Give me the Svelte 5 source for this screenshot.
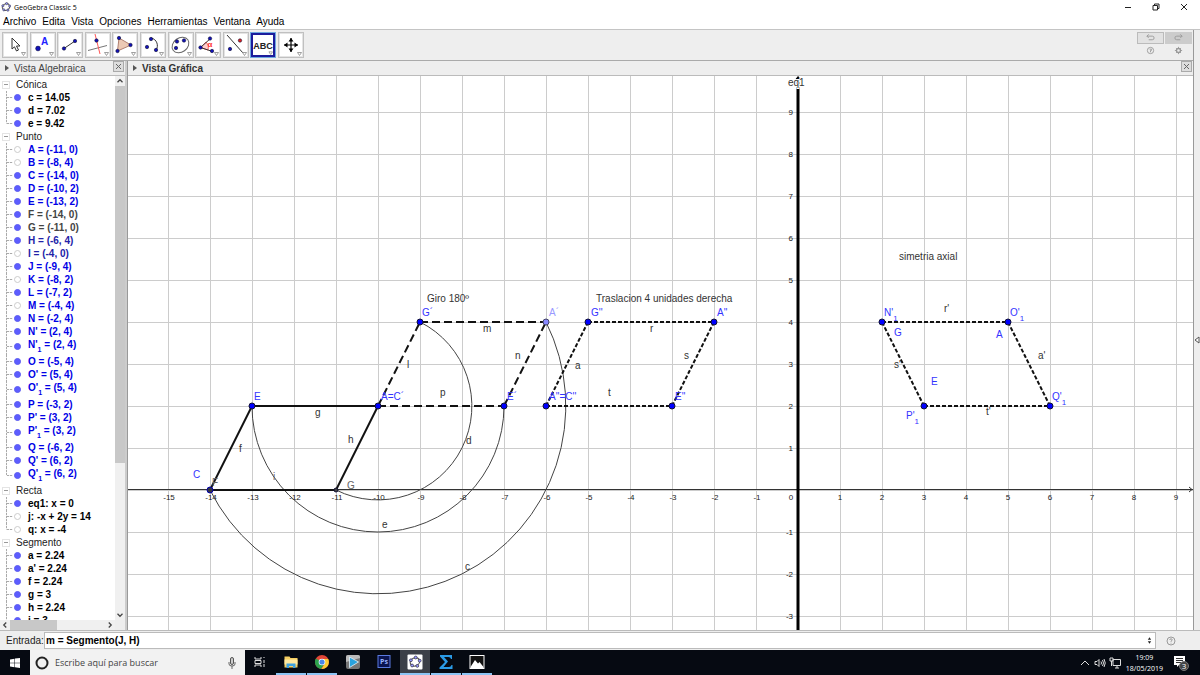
<script lang="ts">
  interface Item {
    name: string;
    sub?: string;
    value: string;
    shown: boolean;
    tone?: string;
  }

  const UNIT = 42;
  const ORIGIN_X = 670;
  const ORIGIN_Y = 414;

  let width = $state(1065);
  let height = $state(554);
  let command = $state("m = Segmento(J, H)");
  let selectedTool = $state("text");

  const menus = ["Archivo", "Edita", "Vista", "Opciones", "Herramientas", "Ventana", "Ayuda"];
  const tools = ["move", "point", "line", "perpendicular", "polygon", "arc", "ellipse", "angle", "reflect", "text", "pan"];

  const groups: { title: string; items: Item[] }[] = $state([
    {
      title: "Cónica",
      items: [
        { name: "c", value: " = 14.05", shown: true },
        { name: "d", value: " = 7.02", shown: true },
        { name: "e", value: " = 9.42", shown: true },
      ],
    },
    {
      title: "Punto",
      items: [
        { name: "A", value: " = (-11, 0)", shown: false, tone: "blue" },
        { name: "B", value: " = (-8, 4)", shown: false, tone: "blue" },
        { name: "C", value: " = (-14, 0)", shown: true, tone: "blue" },
        { name: "D", value: " = (-10, 2)", shown: true, tone: "blue" },
        { name: "E", value: " = (-13, 2)", shown: true, tone: "blue" },
        { name: "F", value: " = (-14, 0)", shown: true, tone: "gray" },
        { name: "G", value: " = (-11, 0)", shown: true, tone: "gray" },
        { name: "H", value: " = (-6, 4)", shown: true, tone: "navy" },
        { name: "I", value: " = (-4, 0)", shown: false, tone: "navy" },
        { name: "J", value: " = (-9, 4)", shown: true, tone: "blue" },
        { name: "K", value: " = (-8, 2)", shown: false, tone: "blue" },
        { name: "L", value: " = (-7, 2)", shown: true, tone: "blue" },
        { name: "M", value: " = (-4, 4)", shown: false, tone: "blue" },
        { name: "N", value: " = (-2, 4)", shown: true, tone: "blue" },
        { name: "N'", value: " = (2, 4)", shown: true, tone: "blue" },
        { name: "N'", sub: "1", value: " = (2, 4)", shown: true, tone: "blue" },
        { name: "O", value: " = (-5, 4)", shown: true, tone: "blue" },
        { name: "O'", value: " = (5, 4)", shown: true, tone: "blue" },
        { name: "O'", sub: "1", value: " = (5, 4)", shown: true, tone: "blue" },
        { name: "P", value: " = (-3, 2)", shown: true, tone: "blue" },
        { name: "P'", value: " = (3, 2)", shown: true, tone: "blue" },
        { name: "P'", sub: "1", value: " = (3, 2)", shown: true, tone: "blue" },
        { name: "Q", value: " = (-6, 2)", shown: true, tone: "blue" },
        { name: "Q'", value: " = (6, 2)", shown: true, tone: "blue" },
        { name: "Q'", sub: "1", value: " = (6, 2)", shown: true, tone: "blue" },
      ],
    },
    {
      title: "Recta",
      items: [
        { name: "eq1", value: ": x = 0", shown: true },
        { name: "j", value: ": -x + 2y = 14", shown: false },
        { name: "q", value: ": x = -4", shown: false },
      ],
    },
    {
      title: "Segmento",
      items: [
        { name: "a", value: " = 2.24", shown: true },
        { name: "a'", value: " = 2.24", shown: true },
        { name: "f", value: " = 2.24", shown: true },
        { name: "g", value: " = 3", shown: true },
        { name: "h", value: " = 2.24", shown: true },
        { name: "i", value: " = 3", shown: true },
      ],
    },
  ]);

  // [x1, y1, x2, y2, style] in graph units
  const segments: [number, number, number, number, string][] = [
    [-14, 0, -13, 2, "solid"],
    [-13, 2, -10, 2, "solid"],
    [-11, 0, -10, 2, "solid"],
    [-14, 0, -11, 0, "solid"],
    [-10, 2, -9, 4, "dashed"],
    [-9, 4, -6, 4, "dashed"],
    [-7, 2, -6, 4, "dashed"],
    [-10, 2, -7, 2, "dashed"],
    [-6, 2, -5, 4, "dotted"],
    [-5, 4, -2, 4, "dotted"],
    [-3, 2, -2, 4, "dotted"],
    [-6, 2, -3, 2, "dotted"],
    [2, 4, 3, 2, "dotted"],
    [2, 4, 5, 4, "dotted"],
    [5, 4, 6, 2, "dotted"],
    [3, 2, 6, 2, "dotted"],
  ];

  // half turns around (-10, 2): start, end and radius
  const arcs: [number, number, number, number, number][] = [
    [-11, 0, -9, 4, Math.sqrt(5)],
    [-13, 2, -7, 2, 3],
    [-14, 0, -6, 4, Math.sqrt(20)],
  ];

  const points: [number, number, string][] = [
    [-14, 0, "start"],
    [-13, 2, "free"],
    [-10, 2, "free"],
    [-11, 0, "small"],
    [-9, 4, "free"],
    [-6, 4, "pale"],
    [-7, 2, "free"],
    [-6, 2, "free"],
    [-5, 4, "free"],
    [-2, 4, "free"],
    [-3, 2, "free"],
    [2, 4, "free"],
    [5, 4, "free"],
    [3, 2, "free"],
    [6, 2, "free"],
  ];

  // label, dx and dy in pixels from the origin, tone, subscript
  const labels: [string, number, number, string, string?][] = [
    ["C", -605, -12, "point"],
    ["F", -586, -4, "gray"],
    ["E", -544, -90, "point"],
    ["A=C´", -417, -90, "point"],
    ["G", -451, -1, "gray"],
    ["G´", -376, -174, "point"],
    ["A´", -249, -174, "light"],
    ["E´", -291, -90, "point"],
    ["G''", -207, -174, "point"],
    ["A''", -81, -174, "point"],
    ["A''=C''", -249, -90, "point"],
    ["E''", -123, -90, "point"],
    ["N'", 86, -174, "point", "1"],
    ["O'", 212, -174, "point", "1"],
    ["Q'", 254, -90, "point", "1"],
    ["P'", 108, -71, "point", "1"],
    ["G", 96, -154, "point"],
    ["A", 198, -152, "point"],
    ["E", 133, -105, "point"],
    ["f", -559, -38, "dark"],
    ["g", -483, -74, "dark"],
    ["h", -450, -47, "dark"],
    ["i", -525, -10, "gray"],
    ["l", -391, -122, "dark"],
    ["m", -315, -158, "dark"],
    ["n", -283, -131, "dark"],
    ["p", -358, -94, "dark"],
    ["d", -332, -46, "dark"],
    ["e", -416, 38, "dark"],
    ["c", -333, 80, "dark"],
    ["a", -223, -121, "dark"],
    ["r", -148, -158, "dark"],
    ["s", -114, -131, "dark"],
    ["t", -190, -94, "dark"],
    ["s'", 96, -122, "dark"],
    ["r'", 146, -178, "dark"],
    ["a'", 240, -131, "dark"],
    ["t'", 188, -75, "dark"],
    ["Giro 180º", -371, -188, "dark"],
    ["Traslacion 4 unidades derecha", -202, -188, "dark"],
    ["simetria axial", 101, -230, "dark"],
    ["eq1", -10, -404, "dark halo"],
  ];

  const range = (from: number, to: number) =>
    Array.from({ length: Math.max(0, to - from + 1) }, (_, i) => from + i);

  const columns = $derived(range(Math.ceil(-ORIGIN_X / UNIT), Math.floor((width - ORIGIN_X) / UNIT)));
  const rows = $derived(range(Math.ceil((ORIGIN_Y - height) / UNIT), Math.floor(ORIGIN_Y / UNIT)));
</script>

{#snippet logo()}
  <ellipse cx="8" cy="8" rx="6" ry="5" fill="none" stroke="#555" stroke-width="1.5" transform="rotate(-25 8 8)" />
  {#each [[3, 6], [9, 2.5], [14, 6.5], [11, 13], [4.5, 12.5]] as [cx, cy]}
    <circle {cx} {cy} r="1.8" fill="#99f" stroke="#223" stroke-width="0.8" />
  {/each}
{/snippet}

{#snippet dot(cx: number, cy: number, fill = "#1212b8")}
  <circle {cx} {cy} r="1.7" {fill} stroke="#113" stroke-width="0.6" />
{/snippet}

<div class="app">
  <header class="titlebar">
    <svg class="app-icon" viewBox="0 0 16 16">{@render logo()}</svg>
    <span class="title">GeoGebra Classic 5</span>
    <button aria-label="Minimizar"><svg viewBox="0 0 8 8"><path d="M1 4.5h6" /></svg></button>
    <button aria-label="Restaurar"><svg viewBox="0 0 8 8"><path d="M1 2.5h4.500v4.500h-4.500zM2.500 2.500v-1.500h4.500v4.500h-1.500" /></svg></button>
    <button aria-label="Cerrar"><svg viewBox="0 0 8 8"><path d="M1 1l6 6M7 1l-6 6" /></svg></button>
  </header>

  <nav class="menubar">
    {#each menus as menu}
      <button>{menu}</button>
    {/each}
  </nav>

  <div class="workspace">
    <main class="main">
      <div class="toolbar">
        <div class="tools">
          {#each tools as tool}
            <button
              class={{ tool: true, selected: selectedTool === tool }}
              aria-label={tool}
              onclick={() => (selectedTool = tool)}
            >
              <svg viewBox="0 0 22 22">
                {#if tool === "move"}
                  <path d="M8 4v11l2.500-2.200 2 4.200 2-1-2-4h3.500z" fill="#fff" stroke="#333" />
                {:else if tool === "point"}
                  <circle cx="6" cy="14.500" r="2.400" fill="#1212b8" stroke="#113" stroke-width="0.500" />
                  <text x="9" y="11" class="tool-letter">A</text>
                {:else if tool === "line"}
                  <path d="M5 14.500L16 7" stroke="#333" />
                  {@render dot(5, 14.5)}
                  {@render dot(16, 7)}
                {:else if tool === "perpendicular"}
                  <path d="M1 16.500l19-5" stroke="#777" />
                  <path d="M8 0l5 20" stroke="#f55" />
                  {@render dot(9.5, 6.5)}
                {:else if tool === "polygon"}
                  <path d="M5 4l12 7L3.500 17z" fill="#ecc9b4" stroke="#b08070" />
                  {@render dot(5, 4)}
                  {@render dot(16.5, 11)}
                  {@render dot(3.5, 17)}
                {:else if tool === "arc"}
                  <path d="M9 4c6 1 8 8 5 12" fill="none" stroke="#333" />
                  {@render dot(9, 5)}
                  {@render dot(5, 13)}
                  {@render dot(14, 16)}
                {:else if tool === "ellipse"}
                  <ellipse cx="10.500" cy="11" rx="9" ry="7" fill="none" stroke="#666" transform="rotate(-35 10.500 11)" />
                  {@render dot(7, 7.5)}
                  {@render dot(14, 6.5)}
                  {@render dot(6, 14)}
                {:else if tool === "angle"}
                  <path d="M3.500 13.500L9 8a7 7 0 0 1 2 8z" fill="#fcc" stroke="#f66" />
                  <path d="M14 4L3.500 13.500l12 4" fill="none" stroke="#333" />
                  <text x="13" y="13" class="alpha">α</text>
                  {@render dot(13, 4.5)}
                  {@render dot(3.5, 13.5)}
                  {@render dot(15, 17)}
                {:else if tool === "reflect"}
                  <path d="M2 1l16 18" stroke="#333" />
                  {@render dot(15, 6.5, "#e02020")}
                  {@render dot(5, 15)}
                {:else if tool === "text"}
                  <text x="11" y="15" class="abc">ABC</text>
                {:else}
                  <path d="M4 11h14M11 4v14" stroke="#000" stroke-width="1.200" />
                  <path d="M11 4l2.500 3.500h-5zM11 18l2.500-3.500h-5zM4 11l3.500-2.500v5zM18 11l-3.500-2.500v5z" fill="#000" />
                {/if}
                <path d="M17.500 18.500h4l-2 3z" fill="#fff" stroke="#888" stroke-width="0.800" />
              </svg>
            </button>
          {/each}
        </div>
        <div class="actions">
          <button class="history" aria-label="Deshacer">
            <svg viewBox="0 0 10 8"><path d="M3 0.500l-2 2 2 2M1 2.500h6q2 0 2 2t-2 2h-4" /></svg>
          </button>
          <button class="history disabled" aria-label="Rehacer">
            <svg viewBox="0 0 10 8"><path d="M7 0.500l2 2-2 2M9 2.500h-6q-2 0-2 2t2 2h4" /></svg>
          </button>
          <button aria-label="Ayuda">
            <svg viewBox="0 0 10 10"><circle cx="5" cy="5" r="3.500" /><path d="M4 3.500h2v1.500h-1v2" /></svg>
          </button>
          <button aria-label="Preferencias">
            <svg viewBox="0 0 10 10"><circle cx="5" cy="5" r="2.200" stroke-width="1.500" /><path d="M5 1v1.500M5 7.500v1.500M1 5h1.500M7.500 5h1.500M2.200 2.200l1 1M6.800 6.800l1 1M7.800 2.200l-1 1M3.200 6.800l-1 1" /></svg>
          </button>
        </div>
      </div>

      <div class="views">
        <section class="algebra">
          <h2 class="view-title">
            <span class="arrow"></span>
            <span class="name">Vista Algebraica</span>
            <button class="close" aria-label="Cerrar Vista Algebraica"><svg viewBox="0 0 9 9"><path d="M2 2l5 5M7 2l-5 5" /></svg></button>
          </h2>
          <div class="tree-area">
            <div class="tree-column">
              <div class="tree">
                {#each groups as group}
                  <div class="group-title"><button class="toggle" aria-label="Contraer {group.title}"></button>{group.title}</div>
                  <ul>
                    {#each group.items as item}
                      <li class={[item.tone, item.sub && "tall"]}>
                        <label>
                          <input type="checkbox" bind:checked={item.shown} />
                          <span>{item.name}{#if item.sub}<sub>{item.sub}</sub>{/if}{item.value}</span>
                        </label>
                      </li>
                    {/each}
                  </ul>
                {/each}
              </div>
              <div class="scroll-x">
                <svg viewBox="0 0 8 8"><path d="M5 2l-2 2 2 2" /></svg>
                <div class="track"><div class="thumb"></div></div>
                <svg viewBox="0 0 8 8"><path d="M3 2l2 2-2 2" /></svg>
              </div>
            </div>
            <div class="scroll-y">
              <svg viewBox="0 0 8 8"><path d="M2 5l2-2 2 2" /></svg>
              <div class="track"><div class="thumb"></div></div>
              <svg viewBox="0 0 8 8"><path d="M2 3l2 2 2-2" /></svg>
            </div>
          </div>
        </section>

        <section class="graphics">
          <h2 class="view-title">
            <span class="arrow"></span>
            <span class="name bold">Vista Gráfica</span>
            <button class="close" aria-label="Cerrar Vista Gráfica"><svg viewBox="0 0 9 9"><path d="M2 2l5 5M7 2l-5 5" /></svg></button>
          </h2>
          <div class="canvas" bind:clientWidth={width} bind:clientHeight={height}>
            <svg {width} {height}>
              <g transform="translate({ORIGIN_X} {ORIGIN_Y})">
                <g class="grid">
                  {#each columns as x}
                    <line x1={x * UNIT + 0.5} x2={x * UNIT + 0.5} y1={-ORIGIN_Y} y2={height - ORIGIN_Y} />
                  {/each}
                  {#each rows as y}
                    <line x1={-ORIGIN_X} x2={width - ORIGIN_X} y1={-y * UNIT + 0.5} y2={-y * UNIT + 0.5} />
                  {/each}
                </g>
                <g class="axis">
                  <line x1={-ORIGIN_X} x2={width - ORIGIN_X} y1="-0.500" y2="-0.500" />
                  <path d="M{width - ORIGIN_X - 4} -3l3 2.500-3 2.500" />
                </g>
                <g class="numbers">
                  {#each columns as x}
                    {#if x === 0}
                      <text x="-7" y="10">0</text>
                    {:else}
                      <text x={x * UNIT + (x < 0 ? 1 : 0)} y="10">{x}</text>
                    {/if}
                  {/each}
                  {#each rows as y}
                    {#if y !== 0}
                      <text class="y" x="-5" y={-y * UNIT + 3}>{y}</text>
                    {/if}
                  {/each}
                </g>
                <line class="mirror" x1="0" x2="0" y1={2 - ORIGIN_Y} y2={height - ORIGIN_Y} />
                <path d="M-4 {5 - ORIGIN_Y}l4-5 4 5z" />
                {#each arcs as [x1, y1, x2, y2, r]}
                  <path class="arc" d="M{x1 * UNIT} {-y1 * UNIT}A{r * UNIT} {r * UNIT} 0 0 0 {x2 * UNIT} {-y2 * UNIT}" />
                {/each}
                {#each segments as [x1, y1, x2, y2, kind]}
                  <line class="segment {kind}" x1={x1 * UNIT} y1={-y1 * UNIT} x2={x2 * UNIT} y2={-y2 * UNIT} />
                {/each}
                {#each points as [x, y, kind]}
                  <circle class="point {kind}" cx={x * UNIT} cy={-y * UNIT} r={kind === "small" ? 2 : 3} />
                {/each}
                {#each labels as [text, x, y, tone, sub]}
                  <text class="label {tone}" {x} {y}>{text}{#if sub}<tspan class="index" dy="5">{sub}</tspan>{/if}</text>
                {/each}
              </g>
            </svg>
          </div>
        </section>
      </div>
    </main>
    <button class="side-handle" aria-label="Mostrar panel lateral"><svg viewBox="0 0 6 8"><path d="M5 1v6L1 4z" /></svg></button>
  </div>

  <div class="inputbar">
    <label for="command">Entrada:</label>
    <div class="field">
      <input id="command" type="text" bind:value={command} />
      <svg viewBox="0 0 6 10"><path d="M3 1l2 3H1zM3 9l2-3H1z" /></svg>
    </div>
    <button aria-label="Ayuda de entrada"><svg viewBox="0 0 10 10"><circle cx="5" cy="5" r="4" /><path d="M3.800 4q0-1.200 1.200-1.200t1.200 1q0 .7-1.200 1.400v.6M5 6.800v.7" /></svg></button>
  </div>

  <footer class="taskbar">
    <button class="start" aria-label="Inicio">
      <svg viewBox="0 0 10 10"><path d="M0 1.400l4.500-.7v4H0zM5 .6L10 0v4.700H5zM0 5.200h4.500v4L0 8.600zM5 5.200h5V10l-5-.7z" fill="#fff" /></svg>
    </button>
    <div class="search">
      <svg class="cortana" viewBox="0 0 14 14"><circle cx="7" cy="7" r="5.500" fill="none" stroke="#222" stroke-width="2" /></svg>
      <input type="text" placeholder="Escribe aquí para buscar" aria-label="Buscar" />
      <svg class="mic" viewBox="0 0 8 12"><rect x="2.500" y="0.500" width="3" height="7" rx="1.500" fill="#ccc" stroke="#555" /><path d="M1 5v2q0 2 3 2t3-2V5M4 9v3" fill="none" stroke="#666" /></svg>
    </div>
    <div class="apps">
      <button aria-label="Vista de tareas">
        <svg viewBox="0 0 16 16"><path d="M3 3v2h6V3M3 13v-2h6v2M3 6.500h6v3H3zM12 3v1M12 6v3M12 10v3" fill="none" stroke="#ddd" /></svg>
      </button>
      <button class="open" aria-label="Explorador de archivos">
        <svg viewBox="0 0 16 16"><path d="M1.500 2.500h5l1 1.500h7v9.500h-13z" fill="#f5cf62" /><path d="M1.500 5.500h13v5h-13z" fill="#ffe9a0" /><path d="M3.500 14V9.500h9V14h-2.500v-2H6v2z" fill="#3fa2e0" /></svg>
      </button>
      <button class="open" aria-label="Chrome">
        <svg viewBox="0 0 16 16">
          <circle cx="8" cy="8" r="7" fill="#e04636" />
          <path d="M1.900 4.500A7 7 0 0 0 7 15l3.500-5.500L8 8z" fill="#2ba24c" />
          <path d="M7.500 15A7 7 0 0 0 14.200 5H8l2.800 4.500z" fill="#fccc32" />
          <circle cx="8" cy="8" r="3.300" fill="#fff" /><circle cx="8" cy="8" r="2.600" fill="#4a86e8" />
        </svg>
      </button>
      <button aria-label="Reproductor">
        <svg viewBox="0 0 16 16"><rect x="1" y="1" width="14" height="14" rx="2" fill="#777" /><path d="M1 8V3q0-2 2-2h10q2 0 2 2v1z" fill="#bbb" /><path d="M4.500 3l9 5-9 5.500z" fill="#29a3df" stroke="#e8f4fa" stroke-width="0.800" /></svg>
      </button>
      <button aria-label="Photoshop">
        <svg viewBox="0 0 16 16"><rect x="2" y="1.500" width="12" height="12" fill="#0a1450" stroke="#5a7ae0" /><text x="8" y="10" class="ps">Ps</text></svg>
      </button>
      <button class="open active" aria-label="GeoGebra">
        <svg viewBox="0 0 16 16"><rect x="0.500" y="0.500" width="15" height="15" rx="1" fill="#fff" /><g transform="translate(1.500 1.500) scale(0.800)">{@render logo()}</g></svg>
      </button>
      <button class="open" aria-label="Editor de ecuaciones">
        <svg viewBox="0 0 16 16"><path d="M2 1h12v4h-1q-.5-2-2.500-2H6l4 4.500L5.500 13H11q2 0 2.500-2h1v4H1.500v-1.500L7 8 2 2.500z" fill="#2b9be6" /></svg>
      </button>
      <button class="open" aria-label="Fotos">
        <svg viewBox="0 0 16 16"><rect x="1" y="1.500" width="14" height="13" fill="#111" stroke="#fff" /><path d="M1.500 13l4.500-7 3 3.500 1.500-1.500 4 5v1.500h-13z" fill="#fff" /></svg>
      </button>
    </div>
    <div class="tray">
      <svg viewBox="0 0 12 12"><path d="M2 8l4-4 4 4" /></svg>
      <svg viewBox="0 0 12 12"><path d="M1 4.500h2l2-2v7l-2-2H1zM7 4.500q1 1.500 0 3M8.500 3q2 3 0 6M10 2q2.500 4 0 8" /></svg>
      <svg viewBox="0 0 12 12"><path d="M4 2.500h7.500v6H4zM6 11h4M8 8.500V11M1 1v3h3V1zM2.500 4v5" /></svg>
      <div class="clock"><span>19:09</span><span>18/05/2019</span></div>
      <svg class="notifications" viewBox="0 0 18 18">
        <path d="M2 2h11v9H7l-2 2v-2H2z" fill="#fff" stroke="none" />
        <path d="M4 4.500h7M4 6.500h7M4 8.500h5" stroke="#333" />
        <circle cx="12" cy="12" r="4.500" fill="#444" stroke="#777" />
        <text x="12" y="15" class="badge">3</text>
      </svg>
    </div>
  </footer>
</div>

<style>
  :global(body) {
    margin: 0;
  }

  .app {
    display: flex;
    flex-direction: column;
    height: 100vh;
    overflow: hidden;
    background-color: #fff;
    color: #222;
    font-family: "Liberation Sans", Arial, sans-serif;
    font-size: 10px;
    line-height: 13px;
  }

  button {
    border: 0;
    padding: 0;
    background: none;
    color: inherit;
    font: inherit;
  }

  svg {
    display: block;
    flex: none;
  }

  .titlebar {
    display: flex;
    align-items: center;
    height: 14px;
    padding-right: 2px;

    .app-icon {
      width: 10px;
      height: 10px;
      margin: 0 3px 0 1px;
    }

    .title {
      flex: 1;
      font-family: "Open Sans", sans-serif;
      font-size: 7px;
      color: #000;
    }

    button {
      display: flex;
      justify-content: center;
      width: 28px;
    }

    button svg {
      width: 8px;
      height: 8px;
      fill: none;
      stroke: #222;
    }
  }

  .menubar {
    display: flex;
    align-items: center;
    gap: 6px;
    height: 15px;
    padding-left: 3px;
    color: #000;
  }

  .workspace {
    display: flex;
    flex: 1;
    min-height: 0;
    border-top: 1px solid #c4c4c4;
    background-color: #eee;
  }

  .main {
    display: flex;
    flex-direction: column;
    flex: 1;
    min-width: 0;
    border-right: 1px solid #999;
  }

  .side-handle {
    display: flex;
    align-items: center;
    width: 6px;
    padding-top: 20px;
  }

  .side-handle svg {
    width: 6px;
    height: 8px;
    fill: #fff;
    stroke: #555;
  }

  .toolbar {
    display: flex;
    align-items: center;
    justify-content: space-between;
    height: 30px;
    padding: 0 1px 0 2px;
  }

  .tools {
    display: flex;
    justify-content: space-between;
    width: 302px;
  }

  .tool {
    box-sizing: border-box;
    width: 26px;
    height: 26px;
    padding: 1px;
    border: 1px solid #c0c0c0;
    background-color: #e4e4e4;

    svg {
      width: 22px;
      height: 22px;
      background-color: #fff;
      fill: none;
    }

    &.selected {
      padding: 0;
      border-color: #6fa8e0;
      background-color: #cfe2f7;
    }

    &.selected svg {
      box-sizing: border-box;
      width: 24px;
      height: 24px;
      border: 2px solid #1c1c9c;
    }
  }

  .tool-letter {
    font-size: 10px;
    font-weight: bold;
    fill: #22f;
  }

  .alpha {
    font-size: 8px;
    font-weight: bold;
    fill: #f33;
    text-anchor: middle;
  }

  .abc {
    font-size: 10px;
    font-weight: bold;
    fill: #222;
    text-anchor: middle;
  }

  .actions {
    display: grid;
    grid-template-columns: 27px 27px;
    column-gap: 1px;
    row-gap: 2px;
    justify-items: center;
    margin-bottom: 4px;

    svg {
      width: 9px;
      height: 9px;
      fill: none;
      stroke: #999;
    }
  }

  .history {
    display: flex;
    box-sizing: border-box;
    align-items: center;
    justify-content: center;
    width: 27px;
    height: 12px;
    border: 1px solid #bbb;
    background-color: #e2e2e2;

    &.disabled {
      border-color: #ccc;
      background-color: #ccc;
    }
  }

  .views {
    display: flex;
    flex: 1;
    min-height: 0;
    border-top: 1px solid #aaa;
  }

  .algebra {
    display: flex;
    flex-direction: column;
    flex: none;
    width: 125px;
    border-right: 2px solid #ccc;
  }

  .graphics {
    display: flex;
    flex-direction: column;
    flex: 1;
    min-width: 0;
    border-left: 1px solid #999;
  }

  .view-title {
    display: flex;
    box-sizing: border-box;
    align-items: center;
    flex: none;
    height: 15px;
    margin: 0;
    padding: 0 2px 0 5px;
    border-bottom: 1px solid #bbb;
    color: #444;
    font-size: 10px;
    font-weight: normal;

    .arrow {
      border: 3px solid transparent;
      border-left: 4px solid #555;
      border-right: 0;
      margin-right: 5px;
    }

    .name {
      flex: 1;
    }

    .bold {
      color: #333;
      font-weight: bold;
    }
  }

  .close {
    width: 9px;
    height: 9px;
    background-color: #ddd;
    outline: 1px solid #aaa;
    margin-bottom: 3px;
  }

  .close svg {
    width: 9px;
    height: 9px;
    stroke: #666;
  }

  .tree-area {
    display: flex;
    flex: 1;
    min-height: 0;
  }

  .tree-column {
    display: flex;
    flex-direction: column;
    flex: 1;
    min-width: 0;
  }

  .tree {
    flex: 1;
    min-height: 0;
    overflow: hidden;
    padding-top: 2px;
    background-color: #fff;
    white-space: nowrap;

    ul {
      margin: 0;
      padding: 0;
      list-style: none;
    }

    li {
      height: 13px;
      padding-left: 14px;
      background:
        repeating-linear-gradient(#aaa 0 2px, #eee 2px 3px) 6px 0 / 1px 100% no-repeat,
        repeating-linear-gradient(90deg, #aaa 0 2px, #eee 2px 3px) 7px 6px / 6px 1px no-repeat;
      color: #000;
      font-weight: bold;
    }

    li:last-child {
      background-size: 1px 50%, 6px 1px;
    }

    li.tall {
      height: 17px;
      background-position: 6px 0, 7px 8px;
    }

    li.blue {
      color: #0000e6;
    }

    li.navy {
      color: #2222a8;
    }

    li.gray {
      color: #444;
    }

    label {
      display: flex;
      align-items: center;
      gap: 7px;
    }

    li.tall input {
      margin-top: 4px;
    }

    input {
      appearance: none;
      box-sizing: border-box;
      flex: none;
      width: 7px;
      height: 7px;
      margin: 0;
      border: 1px solid #ccc;
      border-radius: 50%;
      background-color: #fff;
    }

    input:checked {
      border-color: #5c5cf0;
      background-color: #5c5cff;
    }

    sub {
      font-size: 7px;
      line-height: 0;
      vertical-align: -4px;
    }
  }

  .group-title {
    display: flex;
    align-items: center;
    gap: 6px;
    height: 13px;
    padding-left: 2px;
  }

  .toggle {
    display: flex;
    align-items: center;
    justify-content: center;
    box-sizing: border-box;
    width: 8px;
    height: 8px;
    border: 1px solid #e4e4e4;
  }

  .toggle::before {
    content: "";
    width: 4px;
    height: 1px;
    background-color: #999;
  }

  .scroll-x,
  .scroll-y {
    display: flex;
    flex: none;
    background-color: #f0f0f0;

    svg {
      width: 10px;
      height: 10px;
      fill: none;
      stroke: #444;
    }

    .track {
      flex: 1;
    }

    .thumb {
      background-color: #c8c8c8;
    }
  }

  .scroll-x {
    height: 10px;
  }

  .scroll-x .thumb {
    width: 49%;
    height: 10px;
  }

  .scroll-y {
    flex-direction: column;
    width: 10px;
    margin-bottom: 10px;
  }

  .scroll-y .thumb {
    width: 10px;
    height: 72%;
  }

  .canvas {
    flex: 1;
    min-height: 0;
    overflow: hidden;
    background-color: #fff;
  }

  .grid line {
    stroke: #ccc;
  }

  .axis {
    fill: none;
    stroke: #333;
  }

  .numbers text {
    fill: #222;
    font-size: 8px;
    text-anchor: middle;

    &.y {
      text-anchor: end;
    }
  }

  .mirror {
    stroke: #000;
    stroke-width: 3;
  }

  .arc {
    fill: none;
    stroke: #444;
  }

  .segment {
    stroke: #111;
    stroke-width: 2;

    &.dashed {
      stroke-dasharray: 8 4;
    }

    &.dotted {
      stroke-dasharray: 4 2;
    }
  }

  .point {
    fill: #00f;
    stroke: #113;

    &.start {
      fill: #334;
      stroke: #00a;
    }

    &.small {
      fill: #444;
    }

    &.pale {
      fill: #88f;
      stroke: #446;
    }
  }

  .label {
    fill: #333;
    font-size: 10px;

    &.point {
      fill: #33f;
      stroke: none;
    }

    &.light {
      fill: #99f;
    }

    &.gray {
      fill: #666;
    }

    &.halo {
      stroke: #fff;
      stroke-width: 2;
      paint-order: stroke;
    }
  }

  .index {
    font-size: 8px;
  }

  .inputbar {
    display: flex;
    align-items: center;
    flex: none;
    box-sizing: border-box;
    height: 20px;
    padding: 1px 24px 1px 6px;
    border-top: 1px solid #bbb;
    background-color: #eee;

    label {
      width: 38px;
    }

    .field {
      display: flex;
      align-items: center;
      flex: 1;
      align-self: stretch;
      padding-right: 3px;
      border: 1px solid #bbb;
      background-color: #fff;
      margin-right: 10px;
    }

    .field input {
      flex: 1;
      min-width: 0;
      padding: 0 1px;
      border: 0;
      outline: 0;
      background: none;
      color: #000;
      font: inherit;
      font-weight: bold;
    }

    .field svg {
      width: 5px;
      height: 9px;
      fill: #222;
    }

    button svg {
      width: 10px;
      height: 10px;
      fill: none;
      stroke: #999;
    }
  }

  .taskbar {
    display: flex;
    flex: none;
    height: 25px;
    background-color: #060a12;
    font-family: "Open Sans", sans-serif;
  }

  .start {
    display: flex;
    align-items: center;
    justify-content: center;
    width: 30px;
  }

  .start svg {
    width: 10px;
    height: 10px;
  }

  .search {
    display: flex;
    align-items: center;
    box-sizing: border-box;
    width: 215px;
    padding: 0 9px 0 5px;
    background-color: #f2f2f2;

    .cortana {
      width: 14px;
      height: 14px;
    }

    input {
      flex: 1;
      min-width: 0;
      padding: 0 6px;
      border: 0;
      outline: 0;
      background: none;
      font-family: inherit;
      font-size: 9px;
    }

    input::placeholder {
      color: #444;
      opacity: 1;
    }

    .mic {
      width: 8px;
      height: 12px;
    }
  }

  .apps {
    display: flex;
    flex: 1;
    gap: 1px;

    button {
      display: flex;
      box-sizing: border-box;
      align-items: center;
      justify-content: center;
      width: 30px;
      border-bottom: 2px solid transparent;
    }

    svg {
      width: 16px;
      height: 16px;
    }

    .open {
      border-bottom-color: #8cc4f4;
      background-clip: padding-box;
    }

    .active {
      background-color: #3c4048;
    }
  }

  .ps {
    font-size: 7px;
    font-weight: bold;
    fill: #9ab4ff;
    text-anchor: middle;
  }

  .tray {
    display: flex;
    align-items: center;
    gap: 3px;
    padding-right: 10px;
    color: #fff;

    svg {
      width: 12px;
      height: 12px;
      fill: none;
      stroke: #ddd;
    }

    .notifications {
      width: 18px;
      height: 18px;
    }
  }

  .clock {
    display: flex;
    flex-direction: column;
    align-items: center;
    margin: 0 6px 0 2px;
    font-size: 7px;
    line-height: 11px;
  }

  .badge {
    font-size: 8px;
    fill: #fff;
    stroke: none;
    text-anchor: middle;
  }
</style>
